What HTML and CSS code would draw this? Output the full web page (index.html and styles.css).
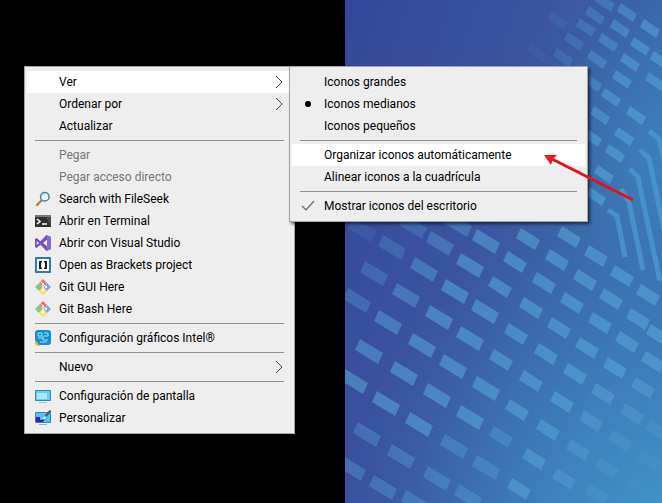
FILE: index.html
```html
<!DOCTYPE html>
<html lang="es">
<head>
    <meta charset="UTF-8">
    <meta name="viewport" content="width=device-width, initial-scale=1.0">
    <title>Escritorio</title>
    <link rel="stylesheet" href="styles.css">
</head>
<body>
    <main class="desktop">
        <div class="blank"></div>
        <div class="wallpaper">
            <svg id="board" viewBox="0 0 317 503" preserveAspectRatio="xMinYMin slice" aria-hidden="true">
                <defs>
                    <linearGradient id="base" x1="0" y1="0" x2="1" y2="0.5">
                        <stop offset="0" stop-color="#34479a"/>
                        <stop offset="0.5" stop-color="#3a549f"/>
                        <stop offset="1" stop-color="#3b74b2"/>
                    </linearGradient>
                    <radialGradient id="glow" gradientUnits="userSpaceOnUse" cx="330" cy="520" r="330">
                        <stop offset="0" stop-color="#4296ca"/>
                        <stop offset="0.4" stop-color="#3f84be" stop-opacity="0.8"/>
                        <stop offset="1" stop-color="#3b68ae" stop-opacity="0"/>
                    </radialGradient>
                    <radialGradient id="side" gradientUnits="userSpaceOnUse" cx="350" cy="160" r="170">
                        <stop offset="0" stop-color="#3d87c0"/>
                        <stop offset="1" stop-color="#3d78b4" stop-opacity="0"/>
                    </radialGradient>
                </defs>
                <rect width="317" height="503" fill="url(#base)"/>
                <rect width="317" height="503" fill="url(#side)"/>
                <rect width="317" height="503" fill="url(#glow)"/>
                <g id="chips"></g>
                <g class="traces">
                    <path d="M263 210l9 6 8 41"/>
                    <path d="M276 189l8 13 14 68"/>
                    <path d="M285 169l8 8 7 34 15 70"/>
                    <path d="M295 150l9 8 15 72"/>
                    <path d="M304 131l10 8 8 34"/>
                </g>
            </svg>
        </div>

        <ul class="menu main-menu" role="menu">
            <li><button class="active">Ver<svg class="more" viewBox="0 0 9 14"><path d="M1 1l6 6-6 6"/></svg></button></li>
            <li><button>Ordenar por<svg class="more" viewBox="0 0 9 14"><path d="M1 1l6 6-6 6"/></svg></button></li>
            <li><button>Actualizar</button></li>
            <li class="line"></li>
            <li><button disabled>Pegar</button></li>
            <li><button disabled>Pegar acceso directo</button></li>
            <li><button>
                <svg class="icon" viewBox="0 0 16 16"><path d="M6.500 9.500L2 14" stroke="#c77a35" stroke-width="2.400" stroke-linecap="round"/><circle cx="9.800" cy="5.800" r="4.300" fill="#e8f6fb" stroke="#4a829c" stroke-width="1.500"/><path d="M7.500 5a2.500 2.500 0 0 1 2.500-2" stroke="#a9dced" fill="none"/></svg>
                Search with FileSeek</button></li>
            <li><button>
                <svg class="icon" viewBox="0 0 16 16"><path d="M0 2h16v12H0z" fill="#303030"/><path d="M0 2h16v2H0z" fill="#777"/><path d="M11 4h5v10z" fill="#484848"/><path d="M2 6l3 2.500L2 11M7 11h5" fill="none" stroke="#fff" stroke-width="1.500"/></svg>
                Abrir en Terminal</button></li>
            <li><button>
                <svg class="icon" viewBox="0 0 16 16"><path d="M0 4l1.500-1 4 3.200L11.500 0 16 2v12l-4.500 2-6-6.200-4 3.200L0 12zm1.800 2v4L4 8zM12 4.800L8 8l4 3.200z" fill="#7650bd" fill-rule="evenodd"/><path d="M12 .200L16 2v12l-4 1.800z" fill="#9670d8" opacity=".7"/></svg>
                Abrir con Visual Studio</button></li>
            <li><button>
                <svg class="icon" viewBox="0 0 16 16"><rect width="16" height="16" rx="1" fill="#247fa9"/><rect x="2" y="2" width="12" height="12" fill="#fff"/><path d="M7 4H4v8h3v-1.500H6v-5h1zM9 4h3v8H9v-1.500h1v-5H9z" fill="#222"/></svg>
                Open as Brackets project</button></li>
            <li><button>
                <svg class="icon" viewBox="0 0 16 16"><path d="M8 0l4 4-4 4-4-4z" fill="#f17265"/><path d="M4 4l4 4-4 4-4-4z" fill="#80c889"/><path d="M12 4l4 4-4 4-4-4z" fill="#76a5ef"/><path d="M8 8l4 4-4 4-4-4z" fill="#ffdc60"/><path d="M5.500 2.500L11 8M8 5v7" stroke="#fff" fill="none"/><circle cx="8" cy="5" r="1.200" fill="#fff"/><circle cx="11" cy="8" r="1.200" fill="#fff"/><circle cx="8" cy="11.500" r="1.200" fill="#fff"/></svg>
                Git GUI Here</button></li>
            <li><button>
                <svg class="icon" viewBox="0 0 16 16"><path d="M8 0l4 4-4 4-4-4z" fill="#f17265"/><path d="M4 4l4 4-4 4-4-4z" fill="#80c889"/><path d="M12 4l4 4-4 4-4-4z" fill="#76a5ef"/><path d="M8 8l4 4-4 4-4-4z" fill="#ffdc60"/><path d="M5.500 2.500L11 8M8 5v7" stroke="#fff" fill="none"/><circle cx="8" cy="5" r="1.200" fill="#fff"/><circle cx="11" cy="8" r="1.200" fill="#fff"/><circle cx="8" cy="11.500" r="1.200" fill="#fff"/></svg>
                Git Bash Here</button></li>
            <li class="line"></li>
            <li><button>
                <svg class="icon" viewBox="0 0 16 16"><rect y="0" width="16" height="15" rx="3" fill="#168fd0"/><path d="M0 10v4l2 2h3z" fill="#e8bf32"/><path d="M3 3h4v3H3zM9 3h4v3H9M3 8h5v2h5M5 12h7M8 6v2" stroke="#9de5ff" fill="none"/></svg>
                Configuración gráficos Intel®</button></li>
            <li class="line"></li>
            <li><button>Nuevo<svg class="more" viewBox="0 0 9 14"><path d="M1 1l6 6-6 6"/></svg></button></li>
            <li class="line"></li>
            <li><button>
                <svg class="icon" viewBox="0 0 16 16"><path d="M.500 2.500h15v10H.500z" fill="#62cdf5" stroke="#3689ad"/><path d="M2 5h10v6H2z" fill="#a8e8ff"/><path d="M4 14.500h8" stroke="#9acbdc"/></svg>
                Configuración de pantalla</button></li>
            <li><button>
                <svg class="icon" viewBox="0 0 16 16"><path d="M.500 2.500h15v10H.500z" fill="#50c4f2" stroke="#3689ad"/><path d="M1 7h4v3l5-1-2 3H1z" fill="#4914b8"/><path d="M15.500.500L10 7" stroke="#555" stroke-width="2"/><path d="M10 6L7 9.500l3-.500 1-2z" fill="#e6f6fb"/><path d="M4 14.500h8" stroke="#79b9d2"/></svg>
                Personalizar</button></li>
        </ul>

        <ul class="menu sub-menu" role="menu">
            <li><button>Iconos grandes</button></li>
            <li><button><svg class="icon" viewBox="0 0 16 16"><circle cx="8" cy="8" r="3" fill="#000"/></svg>Iconos medianos</button></li>
            <li><button>Iconos pequeños</button></li>
            <li class="line"></li>
            <li><button class="active">Organizar iconos automáticamente</button></li>
            <li><button>Alinear iconos a la cuadrícula</button></li>
            <li class="line"></li>
            <li><button><svg class="icon" viewBox="0 0 16 16"><path d="M2 8l4 4 8-9" fill="none" stroke="#666" stroke-width="1.200"/></svg>Mostrar iconos del escritorio</button></li>
        </ul>

        <svg class="pointer" viewBox="0 0 92 50" aria-hidden="true">
            <path d="M89 46L8 5" stroke="#e21219" stroke-width="3"/>
            <path d="M0 1l13 0-4 4-2 6z" fill="#ef1717"/>
        </svg>
    </main>
    <script src="board.js"></script>
</body>
</html>
```

FILE: styles.css
```css
* {
    box-sizing: border-box;
}

body {
    margin: 0;
    background: #000;
    font-family: Roboto, "Segoe UI", sans-serif;
    font-size: 12px;
    color: #000;
}

.desktop {
    position: relative;
    display: flex;
    min-height: 100vh;
    overflow: hidden;
}

.blank {
    width: 345px;
    background: #000;
}

.wallpaper {
    position: relative;
    flex: 1;
    background: #3a64aa;
}

#board {
    position: absolute;
    width: 100%;
    height: 100%;
}

#chips {
    fill: #5aaadb;
}

.traces {
    fill: none;
    stroke: #4b97cd;
    stroke-width: 5px;
    opacity: 0.85;
}

.menu {
    position: absolute;
    margin: 0;
    padding: 4px 2px;
    list-style: none;
    background: #eee;
    border: 1px solid #a5a5a5;
    box-shadow: 2px 2px 3px rgba(0, 0, 0, 0.6);
}

.main-menu {
    left: 24px;
    top: 66px;
    width: 271px;
}

.sub-menu {
    left: 289px;
    top: 66px;
    width: 299px;
}

.menu button {
    position: relative;
    display: flex;
    align-items: center;
    width: 100%;
    height: 22px;
    padding: 0 8px 0 32px;
    border: none;
    background: none;
    font: inherit;
    line-height: 22px;
    color: inherit;
    text-align: left;
    white-space: nowrap;
}

.menu button.active,
.menu button:enabled:hover {
    background: #fff;
}

.menu button:disabled {
    color: #777;
}

.line {
    height: 1px;
    margin: 3px 8px;
    background: #909090;
}

.icon {
    position: absolute;
    left: 8px;
    width: 16px;
    height: 16px;
}

.more {
    width: 9px;
    height: 14px;
    margin-left: auto;
    fill: none;
    stroke: #444;
}

.pointer {
    position: absolute;
    left: 544px;
    top: 154px;
    width: 92px;
    height: 50px;
    pointer-events: none;
}
```

FILE: board.js
```js
// centre of every chip on the circuit board
var chips = [
    [68,227],[113,225],[47,248],[95,244],[141,242],[29,274],[79,270],[125,266],
    [12,301],[61,296],[110,292],[140,312],[43,323],[94,318],[125,339],[24,352],
    [77,346],[108,367],[9,382],[59,374],[141,389],[41,404],[92,396],[125,418],
    [22,435],[74,425],[109,447],[7,469],[56,457],[141,468],[38,488],[92,479],
    [123,497],[70,503],[17,230],
    [183,239],[224,237],[170,262],[212,260],[251,256],[277,276],[155,287],
    [199,283],[240,280],[303,295],[186,308],[227,303],[266,299],[171,334],
    [214,328],[255,323],[293,319],[156,360],[201,354],[242,348],[282,342],
    [313,335],[186,381],[230,374],[270,368],[308,362],[172,410],[217,402],
    [258,394],[298,388],[203,430],[246,421],[287,414],[156,437],[189,459],
    [233,450],[275,441],[312,430],[219,479],[262,468],[304,460],[174,489],
    [293,487],[252,495],
    [218,57],[192,52],[229,41],[252,59],[241,27],[263,42],[213,20],[285,62],
    [275,28],[295,46],[250,15],[282,12],[305,28],[260,2],
    [277,79],[310,81],[266,97],[255,115],[291,115],[247,137],[279,136],
    [247,82],[270,153],[259,174],[251,196],[315,60]
];

var group = document.getElementById("chips");
chips.forEach(function (chip) {
    var x = chip[0], y = chip[1];
    var path = document.createElementNS("http://www.w3.org/2000/svg", "path");
    // chips get smaller to the right and to the top
    var shape = "m-7-11l19 12-5 10-19-12z";
    if (x < 150) shape = "m-9-13l23 14-5 11-23-14z";
    if (y < 220) shape = "m-6-9l16 11-4 8-16-11z";
    path.setAttribute("d", "M" + x + " " + y + shape);
    // and fade out at the top, the left edge and the bottom corner
    var fade = 0.55;
    if (y < 100) fade = Math.min(0.5, Math.max(0.06, (x - 190 + y / 3) / 220));
    else if (x + y < 400) fade = Math.max(0.15, (x + y - 200) / 360);
    var corner = Math.hypot(330 - x, 520 - y);
    if (corner < 170) fade = Math.max(0.05, 0.55 * (corner - 30) / 140);
    else if (y > 430) fade = 0.35;
    path.setAttribute("opacity", fade);
    group.appendChild(path);
});
```
